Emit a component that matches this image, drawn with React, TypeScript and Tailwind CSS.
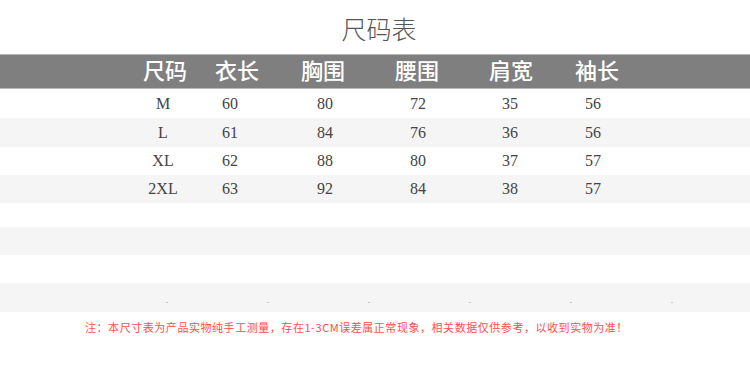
const headers = [
  { label: "尺码", w: "w-[60px]" },
  { label: "衣长", w: "w-[84px]" },
  { label: "胸围", w: "w-[88px]" },
  { label: "腰围", w: "w-[100px]" },
  { label: "肩宽", w: "w-[88px]" },
  { label: "袖长", w: "w-[84px]" },
];

const colWidths = ["w-[60px]", "w-[74px]", "w-[116px]", "w-[70px]", "w-[114px]", "w-[52px]"];

const rows = [
  { cells: ["M", "60", "80", "72", "35", "56"], h: "h-[29px]", bg: "bg-white" },
  { cells: ["L", "61", "84", "76", "36", "56"], h: "h-[29px]", bg: "bg-[#f5f5f5]" },
  { cells: ["XL", "62", "88", "80", "37", "57"], h: "h-[28px]", bg: "bg-white" },
  { cells: ["2XL", "63", "92", "84", "38", "57"], h: "h-[28px]", bg: "bg-[#f5f5f5]" },
];

const empty = [
  { h: "h-[24px]", bg: "bg-white" },
  { h: "h-[28px]", bg: "bg-[#f5f5f5]" },
  { h: "h-[28px]", bg: "bg-white" },
];

export default function App() {
  return (
    <div className="w-[750px] h-[372px] bg-white overflow-hidden">
      <div className="h-[54px] flex items-center justify-center pt-[3px] pl-[8px]">
        <span className="text-[25px] font-light text-[#555] leading-none" style={{ fontFamily: '"Noto Sans CJK SC", sans-serif' }}>
          尺码表
        </span>
      </div>

      <div className="h-[35px] border-y border-[#b9b9b9] bg-[#7f7f7f] flex items-center pl-[135px]">
        {headers.map((h) => (
          <div key={h.label} className={`${h.w} text-center`}>
            <span className="text-[22px] font-medium text-white leading-none" style={{ fontFamily: '"Noto Sans CJK SC", serif' }}>
              {h.label}
            </span>
          </div>
        ))}
      </div>

      {rows.map((r, i) => (
        <div key={i} className={`${r.h} ${r.bg} flex items-center pl-[133px] text-[16px] text-[#444]`} style={{ fontFamily: '"Liberation Serif", serif' }}>
          {r.cells.map((c, j) => (
            <div key={j} className={`${colWidths[j]} text-center`}>{c}</div>
          ))}
        </div>
      ))}

      {empty.map((r, i) => (
        <div key={i} className={`${r.h} ${r.bg}`} />
      ))}

      <div className="h-[29px] bg-[#f5f5f5] flex items-end pb-[9px] pl-[166px] gap-[99px]">
        {[0, 1, 2, 3, 4, 5].map((k) => (
          <div key={k} className="w-[2px] h-[1px] bg-[#c8c8c8]" />
        ))}
      </div>

      <div className="pl-[85px] pt-[6px] leading-none">
        <span className="text-[11px] tracking-[0.55px] text-[#ff4d4d] leading-none" style={{ fontFamily: '"Noto Sans CJK SC", sans-serif' }}>
          注：本尺寸表为产品实物纯手工测量，存在1-3CM误差属正常现象，相关数据仅供参考，以收到实物为准！
        </span>
      </div>
    </div>
  );
}
